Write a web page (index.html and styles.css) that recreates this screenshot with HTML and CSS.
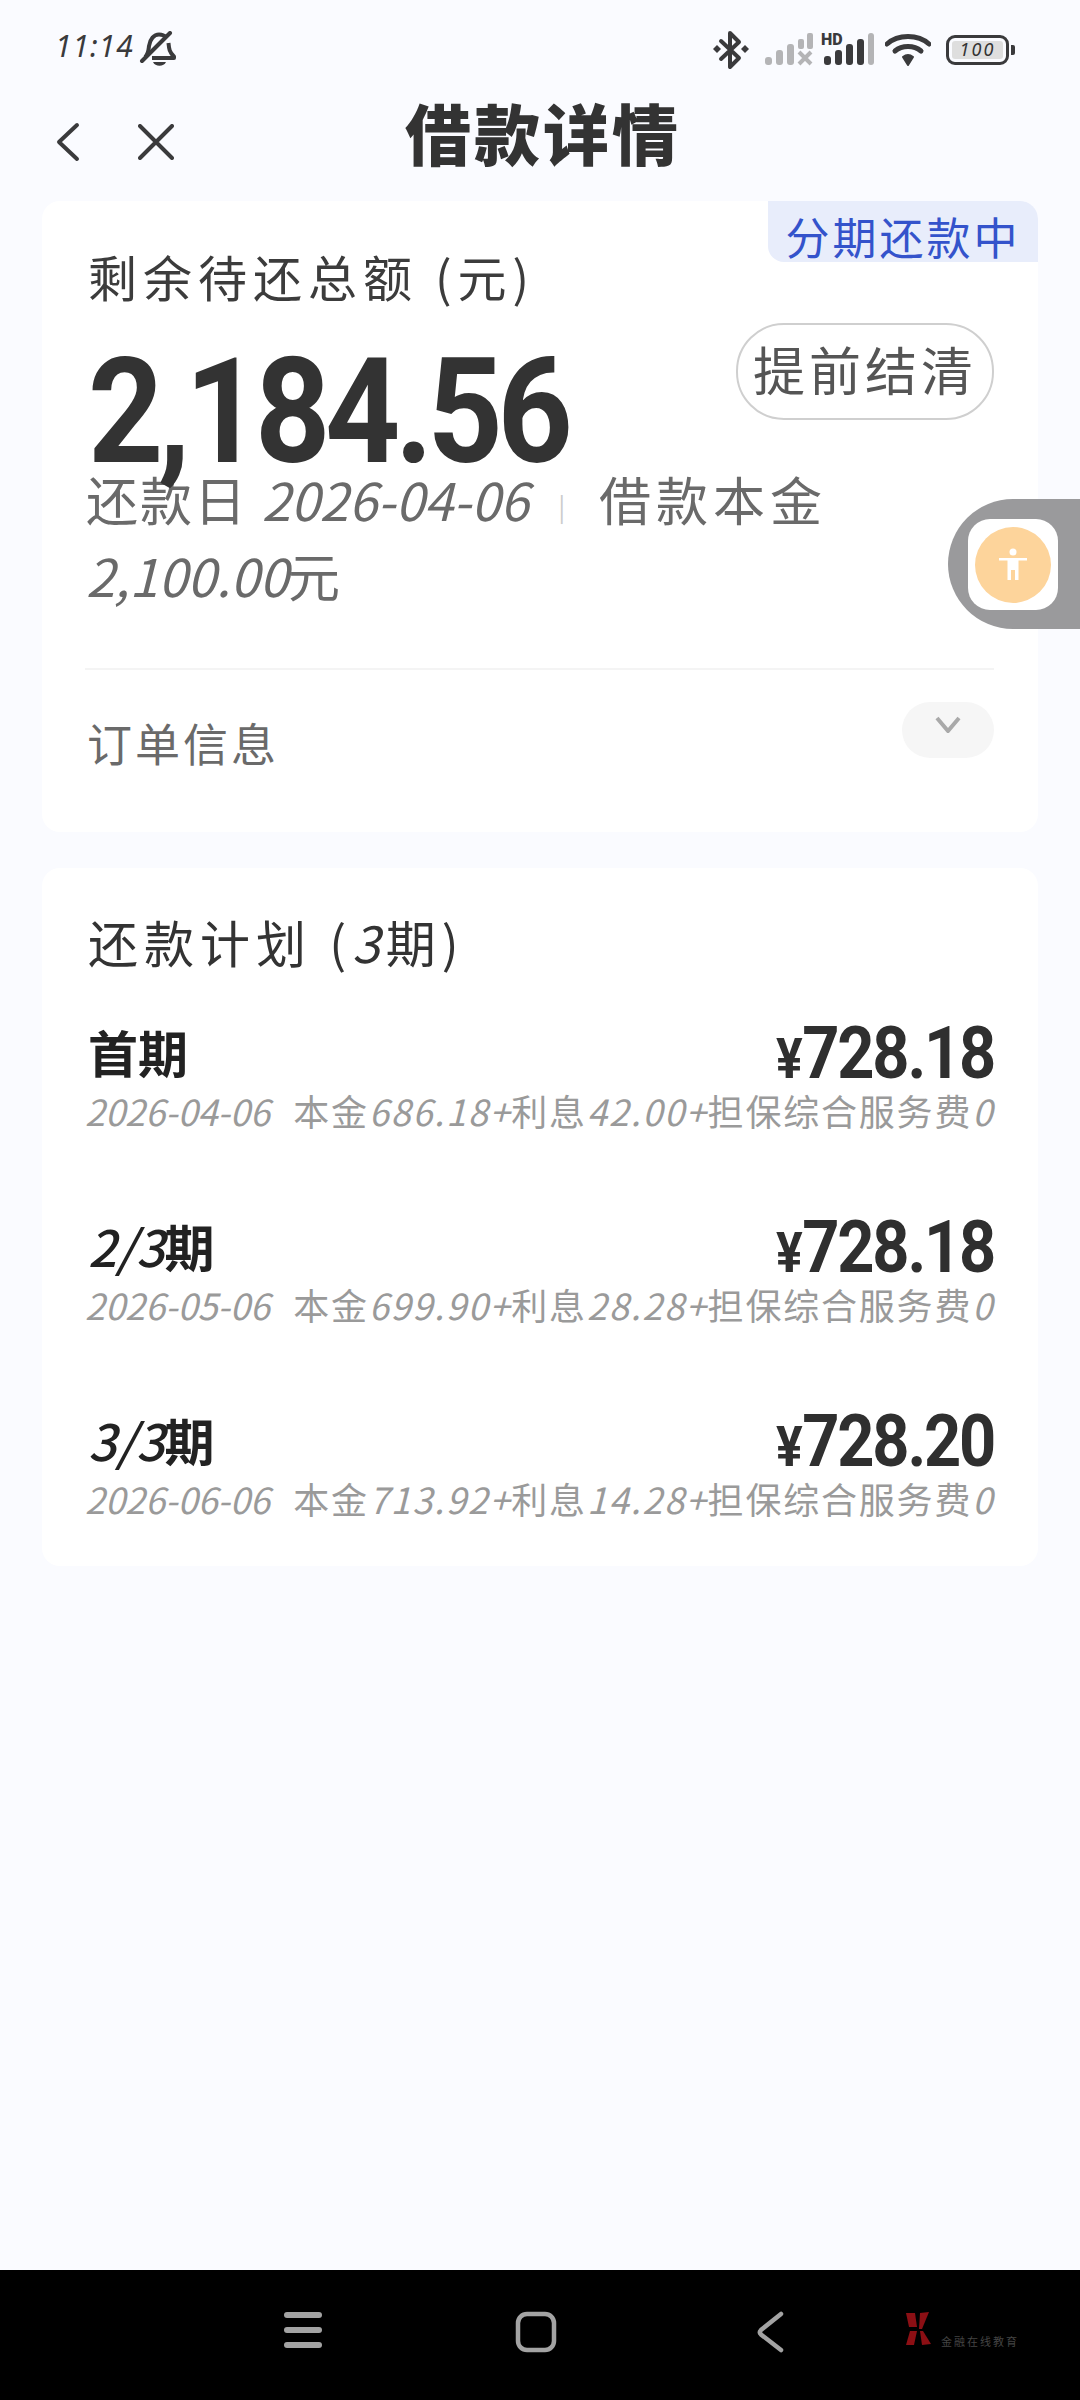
FILE: index.html
```html
<!DOCTYPE html>
<html lang="zh-CN">
<head>
<meta charset="utf-8">
<title>借款详情</title>
<link rel="stylesheet" href="styles.css">
</head>
<body>
<div class="screen">
  <header class="status">
    <div class="status-left">
      <span class="time">11:14</span>
      <svg class="ic-bell" width="38" height="38" viewBox="0 0 38 38"><path d="M6 26c3.500-3 3.500-7 4-11C11 8 15 3.500 20 3.500c3 0 5.500 1 7.200 3M29.500 12c.5 5 .5 9 5.500 13.500V27H13" fill="none" stroke="#3a3a3c" stroke-width="4" stroke-linejoin="round"/><path d="M3 30 31 2" stroke="#3a3a3c" stroke-width="4" stroke-linecap="round"/><path d="M14 31h13c-2 5-11 5-13 0z" fill="#3a3a3c"/></svg>
    </div>
    <div class="status-right">
      <svg width="38" height="40" viewBox="0 0 38 40"><path d="M9 11 27 28 18 37V3l9 9L9 29" fill="none" stroke="#3a3a3c" stroke-width="4" stroke-linejoin="round" stroke-linecap="round"/><path d="M5 15l4 4-4 4-4-4zM33 15l4 4-4 4-4-4z" fill="#3a3a3c"/></svg>
      <svg width="50" height="34" viewBox="0 0 50 34"><g fill="#b4b4b6"><rect x="1" y="24" width="7" height="8" rx="3"/><rect x="12" y="17" width="7" height="15" rx="3"/><rect x="23" y="11" width="7" height="21" rx="3"/><rect x="34" y="6" width="6" height="10" rx="2"/><rect x="43" y="0" width="6" height="16" rx="2"/></g><path d="M35 19l12 12M47 19 35 31" stroke="#b4b4b6" stroke-width="4"/></svg>
      <svg class="sig" width="52" height="34" viewBox="0 0 52 34"><g fill="#3a3a3c"><rect x="1" y="23" width="7" height="9" rx="3"/><rect x="12" y="17" width="7" height="15" rx="3"/><rect x="23" y="11" width="7" height="21" rx="3"/><rect x="34" y="6" width="7" height="26" rx="3"/></g><rect x="45" y="0" width="6" height="32" rx="3" fill="#b4b4b6"/></svg>
      <span class="hd">HD</span>
      <svg width="46" height="34" viewBox="0 0 46 34"><g fill="none" stroke="#3a3a3c" stroke-width="5" stroke-linecap="round"><path d="M2 11C13 1 33 1 44 11"/><path d="M10 18c7-6 19-6 26 0"/></g><path d="M18 24c3-2.500 7-2.500 10 0l-5 8z" fill="#3a3a3c" stroke="#3a3a3c" stroke-width="2" stroke-linejoin="round"/></svg>
      <div class="battery"><div class="battery-body"><span class="battery-fill">100</span></div><i class="battery-nib"></i></div>
    </div>
  </header>

  <nav class="topbar">
    <svg class="ic-back" width="24" height="40" viewBox="0 0 24 40"><path d="M21 3 3 20l18 17" fill="none" stroke="#3a3a3c" stroke-width="4" stroke-linecap="round" stroke-linejoin="round"/></svg>
    <svg class="ic-close" width="36" height="36" viewBox="0 0 36 36"><path d="M2 2l32 32M34 2 2 34" fill="none" stroke="#3a3a3c" stroke-width="4" stroke-linecap="round"/></svg>
    <h1 class="title">借款详情</h1>
  </nav>

  <main class="content">
    <section class="card summary">
      <span class="tag">分期还款中</span>
      <div class="summary-label">剩余待还总额 (元)</div>
      <div class="hero">
        <div class="amount">2,184.56</div>
        <button class="settle">提前结清</button>
      </div>
      <p class="due">还款日 <span class="num date">2026-04-06</span> <span class="sep">|</span> <span class="principal">借款本金</span><br><span class="num principal-value">2,100.00</span>元</p>
      <div class="order">
        <span class="order-label">订单信息</span>
        <span class="pill"><svg width="26" height="17" viewBox="0 0 26 17"><path d="M2 2l11 13L24 2" fill="none" stroke="#a9a9a9" stroke-width="4"/></svg></span>
      </div>
    </section>

    <section class="card plan">
      <h2 class="plan-title">还款计划 (<span class="num">3</span>期)</h2>
      <div class="plan-row">
        <div class="plan-head"><span class="period">首期</span><span class="money"><small>¥</small>728.18</span></div>
        <div class="plan-sub"><span class="num sub-date">2026-04-06</span><span class="detail">本金<span class="num">686.18+</span>利息<span class="num">42.00+</span>担保综合服务费<span class="num">0</span></span></div>
      </div>
      <div class="plan-row">
        <div class="plan-head"><span class="period"><span class="num">2/3</span>期</span><span class="money"><small>¥</small>728.18</span></div>
        <div class="plan-sub"><span class="num sub-date">2026-05-06</span><span class="detail">本金<span class="num">699.90+</span>利息<span class="num">28.28+</span>担保综合服务费<span class="num">0</span></span></div>
      </div>
      <div class="plan-row">
        <div class="plan-head"><span class="period"><span class="num">3/3</span>期</span><span class="money"><small>¥</small>728.20</span></div>
        <div class="plan-sub"><span class="num sub-date">2026-06-06</span><span class="detail">本金<span class="num">713.92+</span>利息<span class="num">14.28+</span>担保综合服务费<span class="num">0</span></span></div>
      </div>
    </section>
  </main>

  <aside class="float">
    <div class="float-box">
      <div class="float-dot">
        <svg width="34" height="34" viewBox="0 0 34 34"><circle cx="17" cy="4" r="3.500" fill="#fff"/><path d="M3 10h28v2.500H22.500V32h-3.500V22h-4v10h-3.500V12.500H3z" fill="#fff"/></svg>
      </div>
    </div>
  </aside>

  <footer class="navbar">
    <svg width="40" height="38" viewBox="0 0 40 38"><g fill="#a3a3a3"><rect x="1" y="1" width="38" height="6" rx="3"/><rect x="1" y="16" width="38" height="6" rx="3"/><rect x="1" y="31" width="38" height="6" rx="3"/></g></svg>
    <svg width="42" height="42" viewBox="0 0 42 42"><rect x="3" y="3" width="36" height="36" rx="9" fill="none" stroke="#a3a3a3" stroke-width="4.500"/></svg>
    <svg width="28" height="42" viewBox="0 0 28 42"><path d="M25 3 5 19c-1.500 1.500-1.500 3 0 4.500L25 39" fill="none" stroke="#a3a3a3" stroke-width="4.500" stroke-linecap="round"/></svg>
    <div class="brand">
      <svg width="30" height="36" viewBox="0 0 30 36"><g fill="#8c0f14"><path d="M3 2h9l2 14H6z"/><path d="M17 2l9-1-7 17h-3z"/><path d="M7 20h7l-3 14-8 0z"/><path d="M17 20h3l8 13-9 1z"/></g></svg>
      <span class="brand-text">金融在线教育</span>
    </div>
  </footer>
</div>
</body>
</html>
```
FILE: styles.css
```css
* { box-sizing: border-box; }
html, body { margin: 0; padding: 0; }
body {
  width: 1080px;
  height: 2400px;
  overflow: hidden;
  background: #fafbff;
  font-family: "Noto Sans CJK SC", "Noto Sans", sans-serif;
  color: #333;
}
.screen {
  position: relative;
  width: 1080px;
  height: 2400px;
  display: flex;
  flex-direction: column;
}
.num { font-style: italic; font-weight: 400; }
.status {
  height: 90px;
  flex: none;
  display: flex;
  justify-content: space-between;
  align-items: flex-start;
  padding: 30px 65px 0 55px;
}
.status-left { display: flex; align-items: flex-start; gap: 5px; }
.time {
  margin-top: -3px;
  font-family: "Noto Sans", sans-serif;
  font-size: 30px;
  line-height: 38px;
  font-style: italic;
  font-weight: 400;
  letter-spacing: 1px;
  color: #3a3a3c;
}
.ic-bell { margin-top: 1px; }
.status-right { position: relative; display: flex; align-items: center; gap: 10px; }
.status-right svg:nth-child(2) { margin-left: 4px; }
.sig { margin-left: -1px; }
.hd {
  position: absolute;
  left: 109px;
  top: 2px;
  font-family: "Roboto", sans-serif;
  font-size: 16px;
  line-height: 15px;
  font-weight: 900;
  color: #3a3a3c;
}
.battery { display: flex; align-items: center; gap: 2px; margin-left: 5px; }
.battery-body {
  width: 63px;
  height: 30px;
  border: 3.500px solid #3a3a3c;
  border-radius: 9px;
  padding: 3px;
  display: flex;
}
.battery-fill {
  flex: 1;
  background: #dedede;
  border-radius: 3px;
  font-family: "Noto Sans", sans-serif;
  font-size: 18px;
  line-height: 17px;
  font-style: italic;
  font-weight: 400;
  text-align: center;
  color: #333;
  letter-spacing: 2px;
}
.battery-nib { width: 4px; height: 10px; background: #3a3a3c; border-radius: 0 2px 2px 0; }

.topbar {
  position: relative;
  height: 111px;
  flex: none;
  display: flex;
  align-items: flex-start;
  padding: 32px 0 0 56px;
}
.ic-close { margin: 2px 0 0 58px; }
.title {
  position: absolute;
  left: 6px;
  right: 0;
  top: -1px;
  margin: 0;
  text-align: center;
  font-size: 66px;
  line-height: 84px;
  font-weight: 900;
  color: #333;
  letter-spacing: 3px;
}

.content {
  padding: 0 42px;
  display: flex;
  flex-direction: column;
  gap: 36px;
}
.card { background: #fff; border-radius: 18px; position: relative; }

.summary { height: 631px; padding: 45px 44px 0 46px; overflow: hidden; }
.tag {
  position: absolute;
  right: 0;
  top: 0;
  width: 270px;
  height: 61px;
  background: #e8edfb;
  border-radius: 0 16px 0 16px;
  color: #3453cb;
  font-size: 44px;
  line-height: 70px;
  text-align: center;
  letter-spacing: 3px;
}
.summary-label {
  font-size: 49px;
  line-height: 60px;
  letter-spacing: 6px;
  color: #3c3c3c;
}
.hero { display: flex; justify-content: space-between; align-items: flex-start; margin-top: 3px; }
.amount {
  margin: 44px 0 0 0;
  font-family: "Roboto", sans-serif;
  font-size: 146px;
  line-height: 120px;
  font-weight: 700;
  letter-spacing: -6px;
  color: #333;
  transform: scaleX(.9);
  transform-origin: left center;
}
.settle {
  margin: 14px 0 0 0;
  width: 258px;
  height: 97px;
  padding: 0 0 6px;
  background: #fff;
  border: 2px solid #cfcfcf;
  border-radius: 48px;
  color: #555;
  font-family: inherit;
  font-size: 52px;
  line-height: 76px;
  letter-spacing: 4px;
}
.due {
  margin: -12px 0 0 -2px;
  font-size: 52px;
  line-height: 76px;
  color: #6a6a6a;
  white-space: nowrap;
  letter-spacing: 2px;
}
.date { letter-spacing: 0; }
.principal { letter-spacing: 5px; }
.principal-value { letter-spacing: 0; }
.sep { font-size: 26px; line-height: 0; color: #ccc; vertical-align: 4px; margin: 0 18px 0 16px; }
.order {
  margin-top: 55px;
  border-top: 2px solid #f4f4f4;
  display: flex;
  justify-content: space-between;
  align-items: flex-start;
  margin-left: -3px;
}
.order-label {
  margin: 42px 0 0 2px;
  font-size: 45px;
  line-height: 62px;
  letter-spacing: 3px;
  color: #6a6a6a;
}
.pill {
  margin-top: 32px;
  width: 92px;
  height: 56px;
  border-radius: 28px;
  background: #f6f6f6;
  display: flex;
  justify-content: center;
  padding-top: 14px;
}

.plan { height: 698px; padding: 43px 44px 36px 46px; }
.plan-title {
  margin: 0 0 50px;
  font-size: 50px;
  line-height: 60px;
  font-weight: 400;
  letter-spacing: 6px;
  color: #333;
}
.plan-row { margin-bottom: 80px; }
.plan-row:last-child { margin-bottom: 0; }
.plan-head { display: flex; justify-content: space-between; align-items: center; height: 60px; }
.period { font-size: 50px; line-height: 60px; font-weight: 700; color: #222; }
.period .num { font-weight: 500; }
.money {
  margin-top: 9px;
  font-family: "Roboto", sans-serif;
  font-size: 73px;
  line-height: 60px;
  font-weight: 700;
  letter-spacing: -2.500px;
  color: #2f2f2f;
  transform: scaleX(.89);
  transform-origin: right center;
}
.money small { font-size: 56px; margin-right: 2px; }
.plan-sub {
  margin: 4px 0 0 -3px;
  display: flex;
  justify-content: space-between;
  font-size: 36px;
  line-height: 50px;
  color: #9a9a9a;
  white-space: nowrap;
}
.sub-date { letter-spacing: 0; }
.detail { letter-spacing: 1.800px; }

.float {
  position: absolute;
  left: 948px;
  top: 499px;
  width: 132px;
  height: 130px;
  background: #9a9a9c;
  border-radius: 65px 0 0 65px;
  padding: 20px 0 0 20px;
}
.float-box {
  width: 90px;
  height: 91px;
  background: #fff;
  border-radius: 22px;
  display: flex;
  align-items: center;
  justify-content: center;
}
.float-dot {
  width: 76px;
  height: 76px;
  border-radius: 50%;
  background: #fdd49b;
  display: flex;
  align-items: center;
  justify-content: center;
}

.navbar {
  position: absolute;
  left: 0;
  right: 0;
  bottom: 0;
  height: 130px;
  background: #000;
  display: flex;
  align-items: flex-start;
  padding: 41px 0 0 283px;
}
.navbar svg:nth-child(2) { margin-left: 192px; }
.navbar svg:nth-child(3) { margin-left: 199px; }
.brand { display: flex; align-items: flex-end; margin-left: 119px; gap: 8px; height: 36px; }
.brand-text { font-size: 11px; line-height: 12px; color: #444; letter-spacing: 2px; }
```
